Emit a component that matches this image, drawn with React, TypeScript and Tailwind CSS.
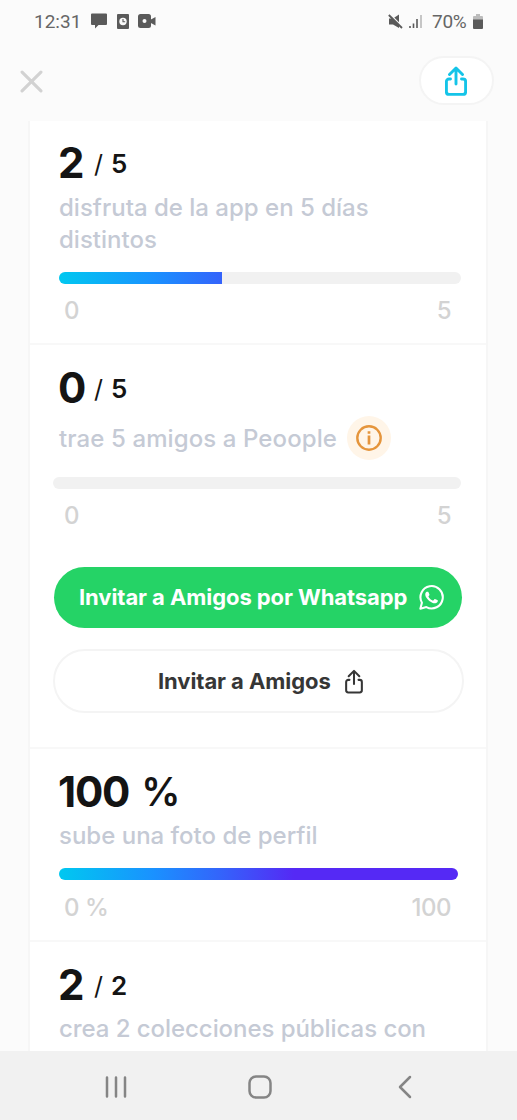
import React from 'react';
import clsx from 'clsx';

const ShareIcon: React.FC<{ className?: string; strokeWidth?: number }> = ({ className, strokeWidth = 2 }) => (
    <svg
        viewBox="0 0 22 30"
        fill="none"
        stroke="currentColor"
        strokeWidth={strokeWidth}
        strokeLinecap="round"
        strokeLinejoin="round"
        className={className}
    >
        <path d="M11 18V2.500M4.500 8.500L11 2l6.500 6.500" />
        <path d="M5.500 13H4a2.600 2.600 0 0 0-2.600 2.600v10.200a2.600 2.600 0 0 0 2.600 2.600h14a2.600 2.600 0 0 0 2.600-2.600V15.600a2.600 2.600 0 0 0-2.600-2.600h-1.500" />
    </svg>
);

const WhatsappIcon: React.FC = () => (
    <svg viewBox="0 0 24 24" fill="currentColor" className="w-[25px] h-[25px]">
        <path
            d="M1.300 22.700l1.500-5.700A10.700 10.700 0 1 1 7.100 21.200z"
            fill="none"
            stroke="currentColor"
            strokeWidth="2"
            strokeLinejoin="round"
        />
        <path d="M17.470 14.380c-.3-.15-1.760-.870-2.030-.970-.27-.1-.47-.15-.67.150-.2.300-.77.970-.94 1.160-.17.200-.35.220-.64.080-.3-.15-1.260-.46-2.390-1.480-.88-.79-1.480-1.760-1.650-2.060-.17-.3-.02-.46.130-.61.130-.13.300-.35.450-.52.150-.17.200-.3.300-.5.100-.2.050-.37-.03-.52-.07-.15-.67-1.610-.92-2.210-.24-.58-.49-.5-.67-.51h-.57c-.2 0-.52.070-.79.370-.27.300-1.040 1.020-1.040 2.480s1.070 2.880 1.210 3.070c.15.200 2.100 3.200 5.080 4.490.71.310 1.260.49 1.690.63.710.23 1.360.19 1.870.12.570-.09 1.760-.72 2.010-1.410.25-.69.250-1.290.17-1.410-.07-.12-.27-.2-.57-.35z" />
    </svg>
);

const StatusBar: React.FC = () => (
    <div className="h-[42px] pl-[34px] pr-[34px] flex items-center justify-between font-[Roboto,sans-serif] text-[#666666]">
        <div className="flex items-center h-full">
            <span className="text-[19px] leading-none w-[57px]">12:31</span>
            <svg viewBox="0 0 16 16" fill="#5a5a5a" className="w-4 h-4">
                <path d="M1 .5h14a1 1 0 0 1 1 1V11a1 1 0 0 1-1 1H7.500L4 15.500V12H1a1 1 0 0 1-1-1V1.500a1 1 0 0 1 1-1z" />
            </svg>
            <svg viewBox="0 0 12 15" className="w-3 h-[15px] ml-[10px]">
                <rect width="12" height="15" rx="1" fill="#5a5a5a" />
                <circle cx="6" cy="7.500" r="3.700" fill="#fafafa" />
                <path d="M6 5v2.800h2.200" fill="none" stroke="#5a5a5a" strokeWidth="1.100" />
            </svg>
            <svg viewBox="0 0 18 14" className="w-[18px] h-[14px] ml-[9px]">
                <rect width="13" height="14" rx="2.500" fill="#5a5a5a" />
                <path d="M12 6l5.500-3v8.500L12 8.500z" fill="#5a5a5a" />
                <circle cx="6.500" cy="7" r="2" fill="#fafafa" />
            </svg>
        </div>
        <div className="flex items-center h-full">
            <svg viewBox="0 0 15 15" className="w-[15px] h-[15px]">
                <path d="M1 4.500h4L11 .5v13.500L5 10.500H1z" fill="#5a5a5a" />
                <path d="M2 .5L15 13.500" stroke="#fafafa" strokeWidth="1.800" />
                <path d="M.8 1L14 14" stroke="#5a5a5a" strokeWidth="1.800" />
            </svg>
            <svg viewBox="0 0 13 14" className="w-[13px] h-[14px] ml-[6px]">
                <path d="M1 14v-2M4.500 14V9.500M8 14V5" stroke="#5a5a5a" strokeWidth="1.600" />
                <path d="M12 14V1" stroke="#b5b5b5" strokeWidth="1.500" />
            </svg>
            <span className="text-[19px] leading-none tracking-[-0.300px] ml-[10px] w-[36px]">70%</span>
            <svg viewBox="0 0 10 15" className="w-[10px] h-[15px] ml-[5px]">
                <path d="M3 0h4v2h2a1 1 0 0 1 1 1v3H0V3a1 1 0 0 1 1-1h2z" fill="#bcbcbc" />
                <path d="M0 5.500h10V14a1 1 0 0 1-1 1H1a1 1 0 0 1-1-1z" fill="#5a5a5a" />
            </svg>
        </div>
    </div>
);

const Header: React.FC = () => (
    <div className="h-[79px] pl-5 pr-[23px] pt-[14px] flex items-start justify-between">
        <button className="mt-[14px] text-[#d2d2d2]">
            <svg viewBox="0 0 22 22" className="w-[23px] h-[23px]" stroke="currentColor" strokeWidth="3" strokeLinecap="round">
                <path d="M2 2l18 18M20 2L2 20" />
            </svg>
        </button>
        <button className="w-[75px] h-[49px] pr-px rounded-full border-2 border-[#f4f4f4] bg-white flex items-center justify-center text-[#14c4e8]">
            <ShareIcon className="w-[22px] h-[30px]" strokeWidth={2.900} />
        </button>
    </div>
);

const Score: React.FC<{ value: string; total: string }> = ({ value, total }) => (
    <div className="h-11 ml-[-1px] flex items-center text-[#141414]">
        <span className="w-[36px] text-[42px] leading-[44px] font-bold tracking-[-1px]">{value}</span>
        <span className="w-[17px] pt-[2px] text-[25px] leading-[44px] font-normal">/</span>
        <span className="pt-[2px] text-[26px] leading-[44px] font-semibold">{total}</span>
    </div>
);

const ProgressBar: React.FC<{ percent: number; className?: string }> = ({ percent, className }) => (
    <div className={clsx('h-[12px] rounded-full bg-[#f1f1f1] overflow-hidden', className)}>
        <div
            className="h-full bg-[linear-gradient(90deg,#00c8f0_0px,#1a91ff_95px,#3365fb_160px,#5529f5_235px)]"
            style={{ width: `${percent}%` }}
        />
    </div>
);

const Range: React.FC<{ from: string; to: string }> = ({ from, to }) => (
    <div className="h-8 pl-[5px] pr-[35px] flex items-center justify-between text-[24px] leading-8 tracking-[-0.500px] font-medium text-[#d3d3d3]">
        <span>{from}</span>
        <span>{to}</span>
    </div>
);

const App: React.FC = () => {
    return (
        <div className="w-[517px] h-[1120px] overflow-hidden flex flex-col bg-[#fbfbfb] font-[Inter,sans-serif]">
            <StatusBar />
            <Header />

            {/* Challenge list */}
            <div className="flex-1 min-h-0 overflow-hidden ml-[28px] w-[460px] border-x-2 border-[#f6f6f6] bg-white">
                <section className="h-[224px] pt-5 pl-[29px] border-b-2 border-[#f8f8f8]">
                    <Score value="2" total="5" />
                    <div className="mt-[7px] h-16 text-[24px] leading-8 font-medium text-[#c5cad5]">
                        <p>disfruta de la app en 5 días</p>
                        <p>distintos</p>
                    </div>
                    <ProgressBar percent={40.500} className="mt-[16px] w-[402px]" />
                    <div className="mt-[11px]">
                        <Range from="0" to="5" />
                    </div>
                </section>

                <section className="h-[404px] pt-[21px] pl-[29px] border-b-2 border-[#f8f8f8]">
                    <Score value="0" total="5" />
                    <div className="mt-[6px] h-11 flex items-center text-[24px] font-medium text-[#c5cad5]">
                        <p className="w-[288px] pt-px tracking-[0.100px] whitespace-nowrap">trae 5 amigos a Peoople</p>
                        <span className="w-11 h-11 rounded-full bg-[#fff5e8] flex items-center justify-center">
                            <svg viewBox="0 0 26 26" className="w-[26px] h-[26px]" fill="none" stroke="#e5953c" strokeWidth="2.400">
                                <circle cx="13" cy="13" r="11.700" />
                                <path d="M13 10.500V19.500M13 6.300V8.700" strokeWidth="2.700" />
                            </svg>
                        </span>
                    </div>
                    <ProgressBar percent={0} className="mt-[17px] ml-[-6px] w-[408px]" />
                    <div className="mt-[11px]">
                        <Range from="0" to="5" />
                    </div>
                    <button className="mt-[35px] ml-[-5px] w-[408px] h-[61px] pl-[25px] rounded-full bg-[#25d366] flex items-center text-white text-[22px] font-bold">
                        <span className="w-[340px] text-left whitespace-nowrap tracking-[-0.080px]">Invitar a Amigos por Whatsapp</span>
                        <WhatsappIcon />
                    </button>
                    <button className="mt-[21px] ml-[-6px] w-[411px] h-[64px] pl-[103px] rounded-full border-2 border-[#f4f4f4] flex items-center text-[#363636] text-[22px] font-bold">
                        <span className="w-[187px] text-left whitespace-nowrap tracking-[-0.080px]">Invitar a Amigos</span>
                        <ShareIcon className="w-[18px] h-[25px]" strokeWidth={2.500} />
                    </button>
                </section>

                <section className="h-[193px] pt-[21px] pl-[29px] border-b-2 border-[#f8f8f8]">
                    <div className="h-11 ml-[-1px] flex gap-[12px] text-[42px] leading-[44px] text-[#141414]">
                        <span className="font-bold tracking-[-1.200px]">100</span>
                        <span className="text-[39px] font-semibold tracking-[-1px]">%</span>
                    </div>
                    <p className="mt-[6px] h-8 text-[24px] leading-8 font-medium text-[#c5cad5]">sube una foto de perfil</p>
                    <ProgressBar percent={100} className="mt-[16px] w-[399px]" />
                    <div className="mt-[12px]">
                        <Range from="0 %" to="100" />
                    </div>
                </section>

                <section className="pt-[21px] pl-[29px]">
                    <Score value="2" total="2" />
                    <p className="mt-[6px] text-[24px] leading-8 font-medium text-[#c5cad5] tracking-[-0.060px] whitespace-nowrap">
                        crea 2 colecciones públicas con
                    </p>
                </section>
            </div>

            {/* System navigation */}
            <nav className="h-[69px] shrink-0 bg-[#f1f1f1] pl-[105px] pr-[105px] pt-[24px] flex items-start text-[#858585]">
                <svg viewBox="0 0 22 24" className="w-[22px] h-[24px]" stroke="currentColor" strokeWidth="2.500" strokeLinecap="round">
                    <path d="M2 2.500v19M11 2.500v19M20 2.500v19" />
                </svg>
                <svg viewBox="0 0 24 24" className="w-[24px] h-[24px] ml-[121px]" fill="none" stroke="currentColor" strokeWidth="2.500">
                    <rect x="1.500" y="1.500" width="21" height="21" rx="6.500" />
                </svg>
                <svg viewBox="0 0 14 24" className="w-[14px] h-[24px] ml-[126px]" fill="none" stroke="currentColor" strokeWidth="2.500" strokeLinecap="round" strokeLinejoin="round">
                    <path d="M12 2L2 12l10 10" />
                </svg>
            </nav>
        </div>
    );
};

export default App;
